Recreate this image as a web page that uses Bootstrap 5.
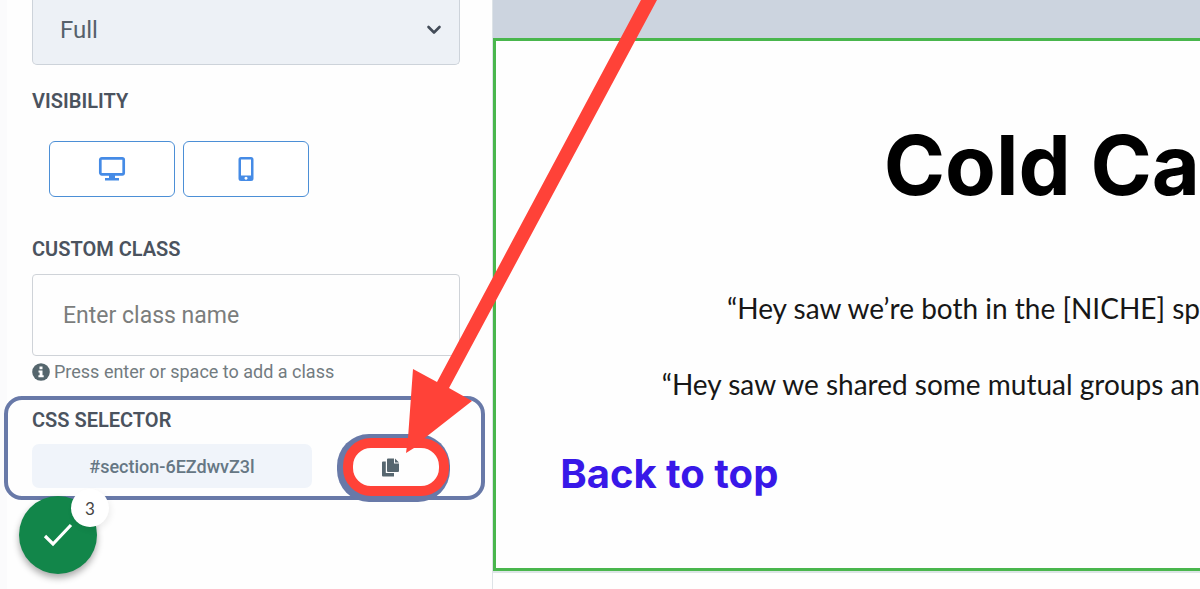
<!DOCTYPE html>
<html lang="en">
<head>
<meta charset="utf-8">
<meta name="viewport" content="width=device-width, initial-scale=1">
<title>Section settings</title>
<link href="https://cdn.jsdelivr.net/npm/bootstrap@5.3.0/dist/css/bootstrap.min.css" rel="stylesheet">
<style>
  body { font-family: Roboto, sans-serif; background: #fefefe; color: #4a5560; }
  .settings { flex: 0 0 41.1%; padding: 0 32px; border-right: 1px solid #dde3e7; box-shadow: inset 7px 0 #fbfbfc; }
  .field-title { font-size: 20px; line-height: 24px; font-weight: 600; color: #4b535e; }
  .width-select { height: 65px; padding: 0 27px 5px; font-size: 24px; color: #56616b; background-color: #edf1f6; border-color: #cdd3da; border-top: 0; border-radius: 0 0 5px 5px;
    background-image: url("data:image/svg+xml,%3Csvg xmlns='http://www.w3.org/2000/svg' viewBox='0 0 16 16'%3E%3Cpath d='M2.500 5l5.500 5.500L13.500 5' fill='none' stroke='%23434c58' stroke-width='2.600' stroke-linecap='round' stroke-linejoin='round'/%3E%3C/svg%3E");
    background-position: right 17px top 22px; background-size: 16px 16px; }
  .device-row { padding: 28px 0 40px 17px; }
  .device-btn { width: 126px; height: 56px; border: 1px solid #4c8fd6; border-radius: 6px; background: #fff; color: #458be6; }
  .class-input { height: 82px; margin-top: 13px; padding: 0 30px; font-size: 23px; border-color: #cfd3d8; border-radius: 4px; background: #fefefe; }
  .class-input::placeholder { color: #7b7d7c; }
  .hint { font-size: 18px; line-height: 24px; color: #727b80; }
  .selector-box { margin: 12px -25px 0 -28px; height: 104px; border: 4px solid #6879a8; border-radius: 18px; padding: 8px 31px 0 24px; }
  .selector-value { flex: 0 1 280px; height: 44px; margin-top: 12px; border-radius: 7px; background: #f0f4fa; color: #667784; font-size: 18px; font-weight: 500; }
  .ring { padding: 4px 1px 6px 6px; border-radius: 32px; background: #6879a8; margin-top: 2px; }
  .copy-btn { width: 106px; height: 58px; border: 10px solid #ff4238; border-radius: 28px; background: #fefefe; color: #56666f; padding: 0 11px 0 0; }
  .fab { left: 19px; top: 496px; width: 78px; height: 78px; background: #12864a; box-shadow: 0 4px 7px #0005; }
  .fab-count { left: 52px; top: -7px; width: 38px; height: 38px; background: #fff; color: #444; font: 17px Lato, sans-serif; box-shadow: 2px 3px 6px #0001; }
  .preview { min-width: 0; }
  .band { height: 38px; background: #ccd4df; }
  .section-frame { height: 533px; border: 3px solid #49b64d; border-right: 0; box-shadow: 0 2px #dce5e6; color: #000; white-space: nowrap; }
  .headline { font: 700 83px/100px Inter, sans-serif; margin: 74px 0 75px; }
  .copy-line { font: 28px/36px Lato, sans-serif; color: #171717; margin-bottom: 40px; }
  .top-link { font: 700 40px/48px Inter, sans-serif; color: #3818e8; margin: 8px 0 0 64px; }
  .arrow { left: 400px; top: 0; }
</style>
</head>
<body>
<div class="d-flex position-relative min-vh-100 overflow-hidden">
  <aside class="settings">
    <select class="form-select width-select" aria-label="Section width"><option>Full</option></select>

    <div class="field-title mt-4">VISIBILITY</div>
    <div class="device-row d-flex gap-2">
      <button type="button" class="device-btn d-flex align-items-center justify-content-center" aria-label="Desktop">
        <svg width="28" height="26" viewBox="0 0 28 26"><rect x="2.3" y="2.3" width="23.4" height="16" rx="1.5" fill="none" stroke="currentColor" stroke-width="2.7"/><path d="M11 19h6v3h4v2.4H7V22h4z" fill="currentColor"/></svg>
      </button>
      <button type="button" class="device-btn d-flex align-items-center justify-content-center" aria-label="Mobile">
        <svg width="16" height="24" viewBox="0 0 16 24"><path fill="currentColor" fill-rule="evenodd" d="M3 0h10q2.500 0 2.500 2.500v19Q15.500 24 13 24H3Q.5 24 .5 21.500v-19Q.5 0 3 0zM3 2.500v16h10v-16zM8 19.800a1.500 1.500 0 1 0 .01 0z"/></svg>
      </button>
    </div>

    <label for="cls" class="field-title d-block">CUSTOM CLASS</label>
    <input id="cls" type="text" class="form-control class-input" placeholder="Enter class name">
    <div class="hint d-flex align-items-center gap-1 mt-1">
      <svg width="18" height="18" viewBox="0 0 18 18"><circle cx="9" cy="9" r="8.800" fill="#55666d"/><path d="M7.500 3.500h3v2.700h-3zM6.500 7.500h4v4.800h1.200v1.900H6.400v-1.900h1.200V9.400H6.500z" fill="#fff"/></svg>
      Press enter or space to add a class
    </div>

    <div class="selector-box">
      <div class="field-title">CSS SELECTOR</div>
      <div class="d-flex justify-content-between align-items-start">
        <div class="selector-value d-flex align-items-center justify-content-center">#section-6EZdwvZ3l</div>
        <div class="ring">
          <button type="button" class="copy-btn d-flex align-items-center justify-content-center" aria-label="Copy selector">
            <svg width="18" height="19" viewBox="0 0 18 19"><path fill="currentColor" d="M1 3.500h2.800V15H12v3.500H1q-1 0-1-1v-13q0-1 1-1zM6 .5h6v5h5V13q0 1-1 1H6q-1 0-1-1V1.500q0-1 1-1zM13 .5l4 4h-4z"/></svg>
          </button>
        </div>
      </div>
    </div>
  </aside>

  <main class="preview flex-grow-1">
    <div class="band"></div>
    <section class="section-frame">
      <h1 class="headline text-end">Cold Ca</h1>
      <p class="copy-line text-end">“Hey saw we’re both in the [NICHE] sp</p>
      <p class="copy-line text-end">“Hey saw we shared some mutual groups an</p>
      <a href="#" class="top-link d-inline-block text-decoration-none">Back to top</a>
    </section>
  </main>

  <button type="button" class="fab position-absolute border-0 rounded-circle p-0" aria-label="Completed checks, 3">
    <svg width="30" height="24" viewBox="0 0 30 24"><path d="M2 13l8 8L28 2" fill="none" stroke="#fff" stroke-width="3.200"/></svg>
    <span class="fab-count position-absolute rounded-circle d-flex align-items-center justify-content-center">3</span>
  </button>
  <svg class="arrow position-absolute pe-none" width="270" height="460" viewBox="400 0 270 460" aria-hidden="true"><path d="M641 0h16L449 388l23 13-46 36-12 11-8 5 2-15 5-69 24 13z" fill="#ff4238"/></svg>
</div>
<script src="https://cdn.jsdelivr.net/npm/bootstrap@5.3.0/dist/js/bootstrap.bundle.min.js"></script>
</body>
</html>
